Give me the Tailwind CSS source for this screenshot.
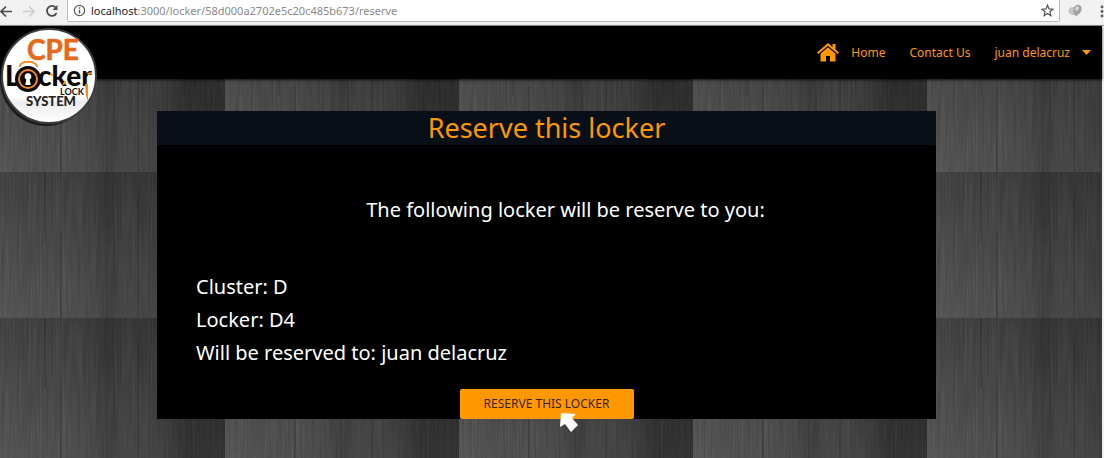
<!DOCTYPE html>
<html lang="en">
<head>
<meta charset="utf-8">
<meta name="viewport" content="width=device-width, initial-scale=1">
<title>Reserve this locker</title>
<script src="https://cdn.jsdelivr.net/npm/@tailwindcss/browser@4"></script>
</head>
<body class="flex min-h-screen flex-col bg-[#f1f1f1] font-['Noto_Sans','Open_Sans',sans-serif]">

<!-- Browser toolbar -->
<div class="flex h-[26px] items-start border-b border-[#9a9a9a] bg-[#f1f1f1]">
  <div class="flex h-[22px] items-center">
    <button aria-label="Back" class="w-[22px]"><svg width="13" height="13" viewBox="0 0 13 13" fill="none" stroke="#4a4a4a" stroke-width="1.7"><path d="M12 6.500H1M6 1.500L1 6.500L6 11.500"/></svg></button>
    <button aria-label="Forward" class="w-[23px]"><svg width="13" height="13" viewBox="0 0 13 13" fill="none" stroke="#cfcfcf" stroke-width="1.700"><path d="M1 6.500H12M7 1.500L12 6.500L7 11.500"/></svg></button>
    <button aria-label="Reload" class="w-[22px]"><svg width="14" height="14" viewBox="0 0 14 14" fill="none" stroke="#4a4a4a" stroke-width="1.800"><path d="M11.500 9A5 5 0 1 1 11 3.800"/><path d="M12.500 1V6H7.500Z" fill="#4a4a4a" stroke="none"/></svg></button>
  </div>
  <div class="flex h-[22px] min-w-0 flex-1 items-center gap-[5px] rounded-b-xs border border-t-0 border-[#b9b9b9] bg-white px-[5px]">
    <svg class="shrink-0" width="13" height="13" viewBox="0 0 13 13" fill="none" stroke="#5a5a5a" stroke-width="1.200"><circle cx="6.500" cy="6.500" r="5.200"/><path d="M6.500 5.700V9.500M6.500 3.300V4.700" stroke-width="1.400"/></svg>
    <p class="min-w-0 flex-1 truncate text-[11px] leading-[20px] text-[#8a8a8a]"><span class="text-[#222]">localhost</span>:3000/locker/58d000a2702e5c20c485b673/reserve</p>
    <button aria-label="Bookmark this page"><svg width="13" height="13" viewBox="0 0 13 13" fill="none" stroke="#555" stroke-width="1.200"><path d="M6.500 1.200L8 4.900L12 5.200L8.900 7.700L9.900 11.600L6.500 9.500L3.100 11.600L4.100 7.700L1 5.200L5 4.900Z"/></svg></button>
  </div>
  <div class="flex h-[22px] shrink-0 items-center pl-[8px]">
    <button aria-label="Extension"><svg width="15" height="14" viewBox="0 0 15 14"><ellipse cx="5" cy="7" rx="4.500" ry="4" fill="#c4c4c4"/><path d="M8.500 1C12 0 14.500 3 13.500 6C13 9 10.500 10 8 12.500C6 10 5 8 5.500 5C6 3 7 1.500 8.500 1Z" fill="#a3a3a3"/><path d="M8.500 2.500C10 2 11 3 10.500 5C10 6.500 8.500 7 7.500 6.500C7 5 7.500 3 8.500 2.500Z" fill="#dedede"/></svg></button>
    <button aria-label="Menu" class="pl-[16px]"><svg width="5" height="13" viewBox="0 0 5 13" fill="#5a5a5a"><circle cx="3" cy="2" r="1.400"/><circle cx="3" cy="6.500" r="1.400"/><circle cx="3" cy="11" r="1.400"/></svg></button>
  </div>
</div>

<div class="relative isolate mr-[2px] flex flex-1 flex-col bg-[#424242]">
  <!-- Tiled dark wood background -->
  <svg class="absolute inset-0 -z-10 h-full w-full" aria-hidden="true">
    <defs>
      <linearGradient id="down" x1="0" y1="0" x2="0" y2="1"><stop offset="0" stop-color="#3c3c3c"/><stop offset=".5" stop-color="#484848"/><stop offset="1" stop-color="#525252"/></linearGradient>
      <linearGradient id="across"><stop offset="0" stop-color="#fff" stop-opacity=".04"/><stop offset=".3" stop-color="#000" stop-opacity="0"/><stop offset=".44" stop-color="#000" stop-opacity=".08"/><stop offset=".5" stop-color="#000" stop-opacity=".2"/><stop offset=".58" stop-color="#000" stop-opacity=".1"/><stop offset=".72" stop-color="#000" stop-opacity=".16"/><stop offset=".84" stop-color="#000" stop-opacity=".36"/><stop offset="1" stop-color="#000" stop-opacity=".36"/></linearGradient>
      <filter id="grain" x="0" y="0" width="100%" height="100%" color-interpolation-filters="sRGB">
        <feTurbulence type="fractalNoise" baseFrequency=".45 .015" numOctaves="2" seed="8"/>
        <feColorMatrix values=".6 0 0 0 0  .6 0 0 0 0  .6 0 0 0 0  0 0 0 0 .16"/>
      </filter>
      <pattern id="wood" x="-9" y="0" width="234" height="146" patternUnits="userSpaceOnUse">
        <rect width="234" height="146" fill="url(#down)"/>
        <rect width="234" height="146" filter="url(#grain)"/>
        <rect width="234" height="146" fill="url(#across)"/>
        <path d="M54 0V70M70 60V146M147 20V146" stroke="#222" stroke-opacity=".25" stroke-width="2"/>
      </pattern>
    </defs>
    <rect width="100%" height="100%" fill="url(#wood)"/>
  </svg>

  <header class="flex h-[53px] items-center justify-end bg-black pr-[11px] shadow-sm shadow-black/60">
    <a href="#" aria-label="CPE Locker Lock System" class="absolute top-0 left-0">
      <svg width="100" height="104" viewBox="0 0 100 104" font-family="Lato, sans-serif" font-weight="900">
        <defs><linearGradient id="plate" x1="0" y1="0" x2="0" y2="1"><stop offset="0" stop-color="#fff"/><stop offset=".72" stop-color="#fff"/><stop offset=".78" stop-color="#ececec"/><stop offset="1" stop-color="#fff"/></linearGradient></defs>
        <circle cx="46" cy="54" r="46" fill="#1d1d1d"/>
        <circle cx="49" cy="50" r="47" fill="url(#plate)" stroke="#3d3d3d" stroke-width="2"/>
        <text x="27" y="34" font-size="28" font-weight="700" fill="#e8681c" stroke="#e8681c" stroke-width=".6">CPE</text>
        <path d="M20 41C19 34 37 34 37 41" fill="none" stroke="#f58a1f" stroke-width="1.800"/>
        <text x="5" y="60" font-size="28" fill="#0a0a0a">L</text>
        <circle cx="28" cy="53" r="13" fill="#0a0a0a"/>
        <circle cx="28" cy="53" r="9" fill="#0a0a0a" stroke="#f58a1f" stroke-width="2"/>
        <path d="M28 47a3.500 3.500 0 0 1 1.700 6.500l1 5.500h-5.400l1-5.500A3.500 3.500 0 0 1 28 47Z" fill="#fff"/>
        <text x="38" y="60" font-size="28" fill="#0a0a0a">cker</text>
        <path d="M50 47l4 2-1 1-3-1ZM62 59l3-5 1 4ZM87 47l5-1v2l-4 1ZM85 58h3v17l-2-5Z" fill="#f58a1f"/>
        <text x="60" y="69" font-size="9" font-weight="700" fill="#111">LOCK</text>
        <text x="26" y="80" font-size="13" font-weight="900" fill="#222">SYSTEM</text>
      </svg>
    </a>
    <nav class="flex items-center gap-6 text-[12px] leading-[20px] text-[#ff9800]">
      <a href="#" class="flex items-center gap-3">
        <svg width="22" height="19" viewBox="0 0 22 19" fill="#ff9800"><path d="M11 0L0 9.500L1.300 11L11 2.700L20.700 11L22 9.500L18.500 6.500V1H15.500V4Z"/><path d="M11 4.200L3.500 10.700V18.500H9V13H13V18.500H18.500V10.700Z"/></svg>
        Home</a>
      <a href="#">Contact Us</a>
      <button class="flex items-center gap-3">juan delacruz <svg width="9" height="5" viewBox="0 0 9 5" fill="#ff9800"><path d="M0 0H9L4.500 5Z"/></svg></button>
    </nav>
  </header>

  <main class="pt-8 pr-[166px] pl-[157px]">
    <section class="bg-black">
      <h1 class="bg-[#080f17] text-center text-[27px] leading-[34px] text-[#ff9800]">Reserve this locker</h1>
      <h2 class="pt-[49px] pl-[38px] text-center text-[20px] leading-[32px] text-white">The following locker will be reserve to you:</h2>
      <div class="pt-[44px] pl-[39px] text-[20px] leading-[33px] text-white">
        <p>Cluster: D</p>
        <p>Locker: D4</p>
        <p>Will be reserved to: juan delacruz</p>
      </div>
      <div class="flex justify-center pt-[20px]">
        <button class="relative h-[30px] w-[174px] rounded-xs bg-[#ff9800] text-[12px] text-[#3a2400]">RESERVE THIS LOCKER
          <svg class="absolute top-[23px] left-[99px]" width="20" height="21" viewBox="0 0 20 21" fill="#fff"><path d="M2 1L17 2L13 6L19 13L12 20L6 12L1 15Z"/></svg>
        </button>
      </div>
    </section>
  </main>
</div>
</body>
</html>
